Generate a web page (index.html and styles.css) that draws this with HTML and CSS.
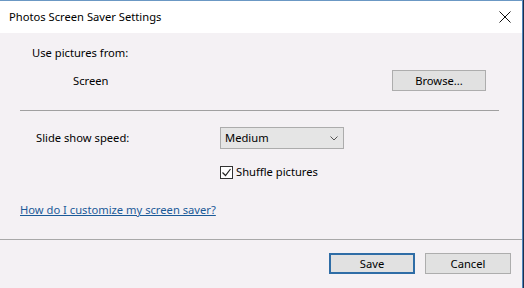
FILE: index.html
```html
<!DOCTYPE html>
<html>
<head>
<meta charset="utf-8">
<link rel="stylesheet" href="styles.css">
</head>
<body>
<div class="window">
  <div class="titlebar">
    <span class="title">Photos Screen Saver Settings</span>
    <svg class="close" width="12" height="12" viewBox="0 0 12 12"><path d="M0.5 0.5 L11.5 11.5 M11.5 0.5 L0.5 11.5" stroke="#111" stroke-width="1" fill="none"/></svg>
  </div>
  <div class="content">
    <div class="label-use">Use pictures from:</div>
    <div class="source-row">
      <span class="source">Screen</span>
      <button class="btn browse">Browse...</button>
    </div>
    <div class="sep"></div>
    <div class="speed-row">
      <span class="speed-label">Slide show speed:</span>
      <div class="select">
        <span>Medium</span>
        <svg width="8" height="5" viewBox="0 0 8 5"><path d="M0.5 0.5 L4 4 L7.5 0.5" stroke="#555" stroke-width="1" fill="none"/></svg>
      </div>
    </div>
    <div class="check-row">
      <span class="checkbox"><svg width="11" height="11" viewBox="0 0 11 11"><path d="M1.5 5.5 L4.5 8.5 L9.5 2" stroke="#222" stroke-width="1.2" fill="none"/></svg></span>
      <span>Shuffle pictures</span>
    </div>
    <a class="help" href="#">How do I customize my screen saver?</a>
  </div>
  <div class="footer">
    <button class="btn save">Save</button>
    <button class="btn cancel">Cancel</button>
  </div>
</div>
</body>
</html>
```
FILE: styles.css
```css
html { background: #1d2f4c; }
body {
  margin: 0;
  font-family: "Noto Sans", "Open Sans", sans-serif;
  font-size: 11.2px;
  color: #000;
}
.window {
  width: 522px;
  height: 287px;
  border-top: 1px solid #6b98c4;
  border-right: 1px solid #4f86bd;
  background: #f4f1f4;
  display: flex;
  flex-direction: column;
}
.titlebar {
  height: 32px;
  background: #fff;
  display: flex;
  align-items: center;
  justify-content: space-between;
  padding: 0 11px 0 9px;
}
.title { line-height: 16px; }
.close { display: block; }
.content {
  padding: 12px 0 0 0;
  line-height: 16px;
}
.label-use { padding-left: 32px; }
.source-row {
  margin-top: 9px;
  height: 21px;
  display: flex;
  align-items: center;
  justify-content: space-between;
  padding: 0 36px 0 73px;
}
.btn {
  font-family: inherit;
  font-size: 11.2px;
  color: #000;
  background: #e1e1e1;
  border: 1px solid #adadad;
  padding: 0;
  margin: 0;
  line-height: 16px;
  box-sizing: border-box;
}
.browse { width: 94px; height: 21px; }
.sep {
  margin: 19px 23px 0 20px;
  height: 1px;
  background: #a0a0a0;
}
.speed-row {
  margin-top: 16px;
  display: flex;
  align-items: center;
  padding-left: 36px;
}
.speed-label { width: 184px; }
.select {
  width: 124px;
  height: 22px;
  box-sizing: border-box;
  background: #e5e5e5;
  border: 1px solid #acacac;
  display: flex;
  align-items: center;
  justify-content: space-between;
  padding: 0 5px 0 4px;
}
.check-row {
  margin-top: 15px;
  padding-left: 220px;
  display: flex;
  align-items: center;
  gap: 3px;
}
.checkbox {
  width: 13px;
  height: 13px;
  box-sizing: border-box;
  border: 1px solid #333;
  background: #fff;
  display: flex;
  align-items: center;
  justify-content: center;
}
.checkbox svg { display: block; }
.help {
  display: block;
  width: max-content;
  margin: 22px 0 0 20px;
  color: #1a5a98;
  text-decoration: underline;
}
.footer {
  margin-top: 21px;
  border-top: 1px solid #a8a8a8;
  padding: 13px 11px 0 0;
  display: flex;
  justify-content: flex-end;
  gap: 10px;
}
.save {
  width: 86px;
  height: 21px;
  border: 2px solid #2f6da6;
}
.cancel { width: 86px; height: 21px; }
```
